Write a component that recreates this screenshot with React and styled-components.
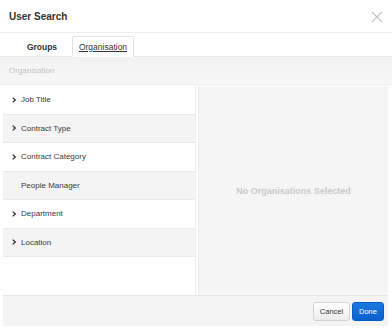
import React from "react";
import styled, { createGlobalStyle } from "styled-components";

const GlobalStyle = createGlobalStyle`
    body {
        margin: 0;
        background: white;
        font-family: "Liberation Sans", Arial, sans-serif;
    }
`;

const Modal = styled.div`
    width: 392px;
    height: 330px;
    display: flex;
    flex-direction: column;
    box-sizing: border-box;
    background: white;
`;

const Header = styled.header`
    height: 33px;
    box-sizing: border-box;
    padding: 0 9px;
    display: flex;
    align-items: center;
    justify-content: space-between;
    border-bottom: 1px solid #eeeeee;
`;

const Title = styled.h1`
    margin: 0;
    font-size: 10px;
    font-weight: bold;
    color: #333;
`;

const Close = styled.button`
    border: 0;
    background: none;
    padding: 0;
    width: 12px;
    height: 12px;
    display: flex;
    margin-top: 2px;
`;

const Tabs = styled.nav`
    height: 24px;
    box-sizing: border-box;
    padding-left: 12px;
    display: flex;
    align-items: flex-end;
    border-bottom: 1px solid #e6e6e6;
`;

const Tab = styled.div`
    width: ${props => props.width}px;
    height: 21px;
    box-sizing: border-box;
    display: flex;
    align-items: center;
    justify-content: center;
    font-size: 8.5px;
    color: #333;
    margin-bottom: -1px;
    background: ${props => props.active ? "white" : "transparent"};
    border: 1px solid ${props => props.active ? "#e3e3e3" : "transparent"};
    border-bottom-color: ${props => props.active ? "white" : "transparent"};
    border-radius: 2px 2px 0 0;
    text-decoration: ${props => props.active ? "underline" : "none"};
    font-weight: ${props => props.active ? "normal" : "bold"};
`;

const Filter = styled.div`
    height: 28px;
    box-sizing: border-box;
    padding: 0 9px;
    display: flex;
    align-items: center;
    background: linear-gradient(#f2f2f2, #f7f7f7);
    border-bottom: 1px solid #ececec;
    font-size: 8px;
    color: #c2c2c2;
`;

const Body = styled.div`
    height: 210px;
    display: flex;
    padding: 0 4px 0 3px;
    gap: 2px;
`;

const List = styled.ul`
    width: 193px;
    margin: 1px 0 0;
    padding: 0;
    list-style: none;
    border-right: 1px solid #ececec;
    box-sizing: border-box;
`;

const Row = styled.li`
    height: 28.5px;
    box-sizing: border-box;
    display: flex;
    align-items: center;
    padding-left: 8px;
    gap: 5px;
    font-size: 8px;
    color: #3a3a3a;
    background: ${props => props.shaded ? "#f4f4f4" : "white"};
    border-bottom: 1px solid #e9e9e9;
`;

const Chevron = styled.span`
    width: 5px;
    display: flex;
    justify-content: center;
`;

const Selected = styled.div`
    flex: 1;
    margin-top: 1px;
    background: #f5f5f5;
    border-left: 1px solid #ededed;
    display: flex;
    align-items: center;
    justify-content: center;
    font-size: 9px;
    font-weight: bold;
    color: #c9c9c9;
`;

const Footer = styled.footer`
    height: 31px;
    margin: 0 4px 0 3px;
    box-sizing: border-box;
    background: #f4f4f4;
    border-top: 1px solid #e6e6e6;
    display: flex;
    align-items: center;
    justify-content: flex-end;
    gap: 2px;
    padding-right: 4px;
`;

const Button = styled.button`
    width: ${props => props.primary ? 32 : 37}px;
    height: 19px;
    padding: 0;
    border-radius: 3px;
    font-family: "Liberation Sans", Arial, sans-serif;
    font-size: 7.5px;
    cursor: pointer;
    color: ${props => props.primary ? "white" : "#333"};
    border: 1px solid ${props => props.primary ? "#0a5bc4" : "#d2d2d2"};
    background: ${props => props.primary
        ? "linear-gradient(#1a7ae0, #0b5fcc)"
        : "linear-gradient(#ffffff, #ececec)"};
`;

const items = [
    { label: "Job Title", arrow: true },
    { label: "Contract Type", arrow: true },
    { label: "Contract Category", arrow: true },
    { label: "People Manager", arrow: false },
    { label: "Department", arrow: true },
    { label: "Location", arrow: true },
];

const Arrow = () => (
    <svg width="4" height="6" viewBox="0 0 4 6">
        <path d="M0.7 0.6 L3.2 3 L0.7 5.4" fill="none" stroke="#333" strokeWidth="1.3" />
    </svg>
);

export default function App() {
    return (
        <Modal>
            <GlobalStyle />
            <Header>
                <Title>User Search</Title>
                <Close aria-label="Close">
                    <svg width="12" height="12" viewBox="0 0 12 12">
                        <path d="M1 1 L11 11 M11 1 L1 11" stroke="#c4c4c4" strokeWidth="1.2" />
                    </svg>
                </Close>
            </Header>
            <Tabs>
                <Tab width={60}>Groups</Tab>
                <Tab width={62} active>Organisation</Tab>
            </Tabs>
            <Filter>Organisation</Filter>
            <Body>
                <List>
                    {items.map((item, i) => (
                        <Row key={item.label} shaded={i % 2 === 1}>
                            <Chevron>{item.arrow && <Arrow />}</Chevron>
                            {item.label}
                        </Row>
                    ))}
                </List>
                <Selected>No Organisations Selected</Selected>
            </Body>
            <Footer>
                <Button>Cancel</Button>
                <Button primary>Done</Button>
            </Footer>
        </Modal>
    );
}
